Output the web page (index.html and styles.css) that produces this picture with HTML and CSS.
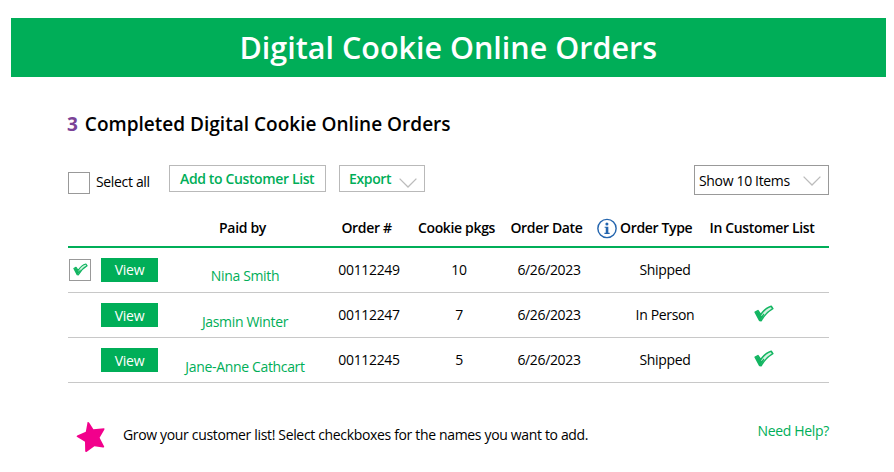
FILE: index.html
```
<!DOCTYPE html>
<html lang="en">

<head>
  <meta charset="UTF-8" />
  <meta name="viewport" content="width=device-width, initial-scale=1.0" />
  <title>Digital Cookie Online Orders</title>
  <link rel="stylesheet" href="styles.css">
</head>

<body>
  <svg width="0" height="0" class="sprite">
    <symbol id="check" viewBox="0 0 20 17">
      <path d="M1.2 7.2 L4 5.6 L6.8 9.6 C9.5 5.5 13 2.3 17.2 1.2 L18.8 3.6 C14 6.4 10 10.4 7.2 15.6 L5.6 15.4 Z" fill="#d5f2e1" stroke="#12b561" stroke-width="1.6" stroke-linejoin="round" />
      <path d="M1.6 7.4 L4 6.2 L7.6 11 L9.6 8.4 L10.4 9.6 L6.6 15.2 L5.2 14.8 Z" fill="#12b561" />
    </symbol>
    <symbol id="arrow" viewBox="0 0 18 10">
      <path d="M0.6 0.6 L9 9 L17.4 0.6" fill="none" stroke="#bcbcbc" stroke-width="1.3" />
    </symbol>
  </svg>

  <h1 class="banner">Digital Cookie Online Orders</h1>

  <div class="container">
    <h2><span class="count">3</span> Completed Digital Cookie Online Orders</h2>

    <div class="toolbar">
      <span class="checkbox"></span>
      <span class="select-all">Select all</span>
      <button class="btn btn-add">Add to Customer List</button>
      <button class="btn btn-export">Export <svg class="arrow"><use href="#arrow" /></svg></button>
      <div class="show-items">Show 10 Items <svg class="arrow"><use href="#arrow" /></svg></div>
    </div>

    <div class="orders">
      <div class="row head">
        <span></span>
        <span></span>
        <span class="shift">Paid by</span>
        <span class="shift">Order #</span>
        <span class="shift">Cookie pkgs</span>
        <span class="shift">Order Date</span>
        <span class="type-head">
          <svg class="info" viewBox="0 0 21 21">
            <circle cx="10.5" cy="10.5" r="9.6" fill="#fff" stroke="#2465ae" stroke-width="1.5" />
            <circle cx="10.4" cy="5.8" r="1.6" fill="#2465ae" />
            <path d="M8 8.6 H11.9 V15 H13.3 V16.3 H7.8 V15 H9.2 V9.8 H8 Z" fill="#2465ae" />
          </svg>
          <span>Order Type</span>
        </span>
        <span class="list-head">In Customer List</span>
      </div>
      <div class="row first">
        <span class="checkbox checked"><svg><use href="#check" /></svg></span>
        <button class="view">View</button>
        <a class="name">Nina Smith</a>
        <span>00112249</span>
        <span>10</span>
        <span>6/26/2023</span>
        <span class="type">Shipped</span>
        <span></span>
      </div>
      <div class="row">
        <span></span>
        <button class="view">View</button>
        <a class="name">Jasmin Winter</a>
        <span>00112247</span>
        <span>7</span>
        <span>6/26/2023</span>
        <span class="type">In Person</span>
        <span class="listed"><svg><use href="#check" /></svg></span>
      </div>
      <div class="row">
        <span></span>
        <button class="view">View</button>
        <a class="name">Jane-Anne Cathcart</a>
        <span>00112245</span>
        <span>5</span>
        <span>6/26/2023</span>
        <span class="type">Shipped</span>
        <span class="listed"><svg><use href="#check" /></svg></span>
      </div>
    </div>

    <div class="footer">
      <svg class="star" viewBox="0 0 30 32">
        <path d="M11.6 1 Q12.6 0.6 13.4 2 L17.4 8.2 L28 7.2 Q29 7.5 28.3 8.7 L23.6 16.7 L28.2 25.4 Q28.3 26.8 27 26.5 L18.4 25.2 L10.5 31 Q9.2 31.4 9.2 30 L9 20.8 L0.8 15.8 Q0.2 15 1.2 14.4 L9.8 10.8 Z" fill="#f2008c" />
      </svg>
      <p>Grow your customer list! Select checkboxes for the names you want to add.</p>
      <a class="help">Need Help?</a>
    </div>
  </div>
</body>

</html>
```
FILE: styles.css
```
body {
  font-family: "Open Sans", "Noto Sans", sans-serif;
  font-size: 14px;
  letter-spacing: -0.34px;
  line-height: 20px;
  color: #000;
  background-color: #fff;
  margin: 0;
  padding: 18px 8px 0 10.5px;
}

.sprite {
  display: block;
}

.banner {
  height: 59px;
  margin: 0;
  background-color: #00ae58;
  color: #fff;
  font-size: 30.5px;
  font-weight: 600;
  letter-spacing: 0;
  line-height: 59px;
  text-align: center;
}

.container {
  width: 761px;
  margin-left: 57.5px;
}

h2 {
  margin: 33px 0 0 -1px;
  font-size: 19.05px;
  font-weight: 600;
  letter-spacing: 0;
  line-height: 28px;
}

.count {
  color: #7b4397;
  font-weight: 700;
  margin-right: 2px;
}

.toolbar {
  display: flex;
  align-items: flex-start;
  margin-top: 27px;
  height: 31px;
}

.checkbox {
  box-sizing: border-box;
  width: 22px;
  height: 22px;
  border: 1px solid #999;
}

.toolbar .checkbox {
  margin-top: 7px;
}

.select-all {
  width: 73px;
  margin: 7px 0 0 6px;
}

.btn {
  display: flex;
  box-sizing: border-box;
  height: 27px;
  padding: 0 10px;
  border: 1px solid #b9b9b9;
  background-color: #fff;
  color: #00ae58;
  font-family: inherit;
  font-size: 14px;
  font-weight: 600;
  letter-spacing: -0.37px;
  line-height: 26px;
  white-space: nowrap;
}

.btn-add {
  width: 157px;
}

.btn-export {
  width: 86px;
  margin-left: 13px;
  padding: 0 7px 0 9px;
  justify-content: space-between;
}

.arrow {
  width: 18px;
  height: 10px;
}

.btn-export .arrow {
  margin-top: 12px;
}

.show-items {
  display: flex;
  box-sizing: border-box;
  justify-content: space-between;
  align-items: center;
  width: 135px;
  height: 30px;
  margin-left: auto;
  padding: 2px 7px 0 4px;
  border: 1px solid #999;
}

.row {
  display: grid;
  grid-template-columns: 33px 57px 174px 74px 106px 74px 111px 132px;
  align-items: center;
  box-sizing: border-box;
  height: 45px;
  border-bottom: 1px solid #c8c8c8;
  text-align: center;
  white-space: nowrap;
}

.head {
  height: 52px;
  padding-top: 13px;
  border-bottom: 2px solid #00ae58;
  font-weight: 600;
}

.first {
  padding-bottom: 1px;
}

/* the first headings sit a little left of their columns */
.shift {
  margin: 0 2px 0 -3px;
}

.list-head {
  margin-right: 2px;
}

.type-head {
  display: flex;
  align-items: center;
  gap: 3px;
  padding-left: 11px;
}

.info {
  width: 20px;
  height: 21px;
  margin-top: 2px;
}

.row .checkbox {
  display: flex;
  align-items: center;
  justify-content: center;
  margin-left: 1px;
}

.checked svg {
  width: 15px;
  height: 13px;
}

.view {
  height: 24px;
  padding: 0;
  border: none;
  background-color: #00ae58;
  color: #fff;
  font-family: inherit;
  font-size: 14px;
  letter-spacing: -0.3px;
  line-height: 23px;
}

.name {
  margin-top: 13px;
}

.name,
.help {
  color: #00ae58;
}

.type {
  padding-left: 47px;
}

.listed svg {
  display: block;
  width: 20px;
  height: 17px;
  margin: -4px auto 0;
  padding-left: 2px;
}

.footer {
  display: flex;
  align-items: flex-start;
  margin-top: 38px;
}

.star {
  width: 30px;
  height: 32px;
  margin-left: 8px;
}

.footer p {
  margin: 4px 0 0 17px;
}

.help {
  margin-left: auto;
}
```
